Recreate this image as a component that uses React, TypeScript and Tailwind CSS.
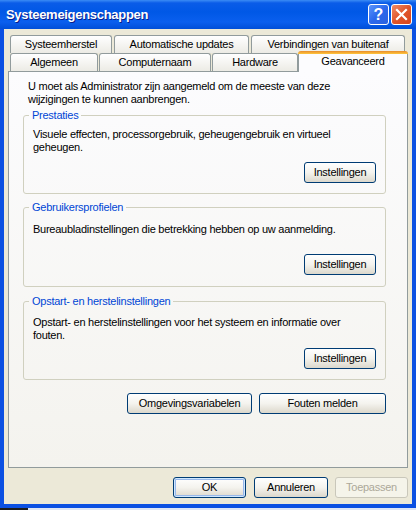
import React from 'react';

function Button({ children, className = '', isDefault = false, disabled = false }: { children: React.ReactNode; className?: string; isDefault?: boolean; disabled?: boolean }) {
  if (disabled) {
    return (
      <div className={`flex h-[21px] items-center justify-center rounded-[3px] border border-[#c9c7ba] bg-[#f5f4ea] text-[#aca899] ${className}`}>
        {children}
      </div>
    );
  }
  return (
    <div
      className={`flex h-[21px] items-center justify-center rounded-[3px] border border-[#003c74] bg-linear-to-b from-[#ffffff] via-[#f4f3ee] to-[#dcd8cc] text-black ${
        isDefault ? 'shadow-[inset_0_0_0_1px_#cee7ff,inset_0_0_0_2px_#98b8ea]' : ''
      } ${className}`}
    >
      {children}
    </div>
  );
}

function Tab({ label, className = '' }: { label: string; className?: string }) {
  return (
    <div className={`flex h-[18px] items-center justify-center rounded-t-[3px] border border-b-0 border-[#919b9c] bg-linear-to-b from-[#ffffff] to-[#ecebe5] ${className}`}>
      {label}
    </div>
  );
}

export default function App() {
  return (
    <div className="flex h-[510px] w-[416px] flex-col font-['Liberation_Sans',Arial,sans-serif] text-[11px] leading-[13px] tracking-[-0.25px] text-black">
      {/* Title bar */}
      <div className="flex h-[29px] items-center justify-between bg-[linear-gradient(to_bottom,#3b8cf5_0px,#0a5ce8_3px,#0058e6_12px,#0a5fee_22px,#004ed8_29px)] pl-[6px] pr-[4px]">
        <span className="text-[13px] font-bold tracking-[-0.3px] text-white [text-shadow:1px_1px_0_#0a1e8a]">Systeemeigenschappen</span>
        <div className="flex gap-[2px]">
          <div className="flex h-[21px] w-[21px] items-center justify-center rounded-[3px] border border-white bg-linear-to-br from-[#5b94fb] via-[#2b68ec] to-[#2c62e0] text-[16px] font-bold tracking-normal text-white">
            ?
          </div>
          <div className="flex h-[21px] w-[21px] items-center justify-center rounded-[3px] border border-white bg-linear-to-br from-[#f08a64] via-[#e0552a] to-[#d9441c]">
            <svg width="13" height="13" viewBox="0 0 13 13">
              <path d="M2 2 L11 11 M11 2 L2 11" stroke="white" strokeWidth="2.2" strokeLinecap="square" />
            </svg>
          </div>
        </div>
      </div>

      {/* Client area */}
      <div className="flex h-[479px] flex-col border-x-4 border-b-4 border-[#0b50e2] bg-[#ece9d8] pt-[6px]">
        <div className="mx-[4px] flex flex-col">
          {/* Back row of tabs */}
          <div className="ml-[2px] flex gap-[2px]">
            <Tab label="Systeemherstel" className="w-[102px]" />
            <Tab label="Automatische updates" className="w-[135px]" />
            <Tab label="Verbindingen van buitenaf" className="w-[154px]" />
          </div>
          {/* Front row of tabs */}
          <div className="ml-[2px] flex h-[18px] items-end">
            <Tab label="Algemeen" className="w-[88px]" />
            <Tab label="Computernaam" className="ml-[1px] w-[112px]" />
            <Tab label="Hardware" className="ml-[1px] w-[86px]" />
            <div className="relative z-10 -mb-px flex h-[21px] w-[110px] flex-col">
              <div className="h-[3px] rounded-t-[3px] bg-linear-to-b from-[#e68b2c] to-[#ffc73c]" />
              <div className="flex flex-1 items-center justify-center border-x border-[#919b9c] bg-[#fcfcfe] pb-[4px]">Geavanceerd</div>
            </div>
          </div>

          {/* Tab page */}
          <div className="flex h-[397px] flex-col border border-[#919b9c] bg-linear-to-b from-[#fcfcfe] to-[#f4f3ee] pl-[14px] pr-[21px] pt-[8px]">
            <p className="pl-[5px]">
              U moet als Administrator zijn aangemeld om de meeste van deze
              <br />
              wijzigingen te kunnen aanbrengen.
            </p>

            <fieldset className="mt-[3px] rounded-[3px] border border-[#d0d0bf]">
              <legend className="ml-[5px] px-[3px] text-[#0046d5]">Prestaties</legend>
              <div className="flex flex-col px-[9px] pb-[10px] pt-[6px]">
                <p>
                  Visuele effecten, processorgebruik, geheugengebruik en virtueel
                  <br />
                  geheugen.
                </p>
                <div className="mt-[8px] flex justify-end">
                  <Button className="w-[72px]">Instellingen</Button>
                </div>
              </div>
            </fieldset>

            <fieldset className="mt-[7px] rounded-[3px] border border-[#d0d0bf]">
              <legend className="ml-[5px] px-[3px] text-[#0046d5]">Gebruikersprofielen</legend>
              <div className="flex flex-col px-[9px] pb-[11px] pt-[9px]">
                <p>Bureaubladinstellingen die betrekking hebben op uw aanmelding.</p>
                <div className="mt-[18px] flex justify-end">
                  <Button className="w-[72px]">Instellingen</Button>
                </div>
              </div>
            </fieldset>

            <fieldset className="mt-[8px] rounded-[3px] border border-[#d0d0bf]">
              <legend className="ml-[5px] px-[3px] text-[#0046d5]">Opstart- en herstelinstellingen</legend>
              <div className="flex flex-col px-[9px] pb-[10px] pt-[8px]">
                <p>
                  Opstart- en herstelinstellingen voor het systeem en informatie over
                  <br />
                  fouten.
                </p>
                <div className="mt-[6px] flex justify-end">
                  <Button className="w-[72px]">Instellingen</Button>
                </div>
              </div>
            </fieldset>

            <div className="mt-[13px] flex justify-end gap-[7px]">
              <Button className="w-[125px]">Omgevingsvariabelen</Button>
              <Button className="w-[127px]">Fouten melden</Button>
            </div>
          </div>
        </div>

        {/* Dialog buttons */}
        <div className="mr-[4px] mt-[9px] flex justify-end">
          <Button className="w-[73px]" isDefault>OK</Button>
          <Button className="ml-[8px] w-[74px]">Annuleren</Button>
          <Button className="ml-[7px] w-[73px]" disabled>Toepassen</Button>
        </div>
      </div>

      {/* Desktop behind the window */}
      <div className="flex h-[2px]">
        <div className="w-[28px] bg-[#1c1c1c]" />
        <div className="flex-1 bg-[#dfe6f5]" />
      </div>
    </div>
  );
}
